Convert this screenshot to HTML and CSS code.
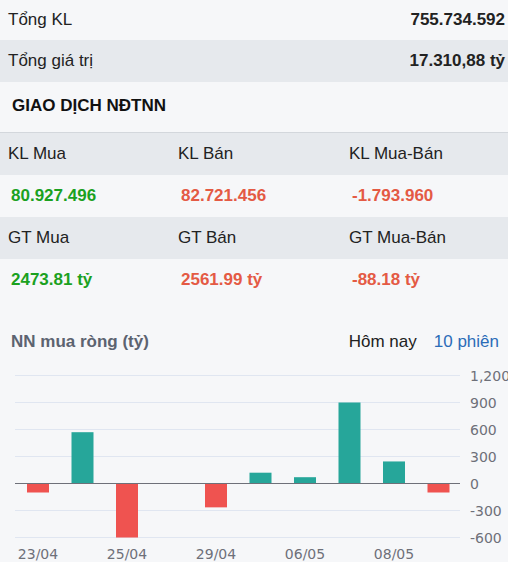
FILE: index.html
```html
<!DOCTYPE html>
<html lang="vi">
<head>
  <meta charset="UTF-8" />
  <meta name="viewport" content="width=device-width, initial-scale=1.0" />
  <title>Giao dịch NĐTNN</title>
  <link rel="stylesheet" href="styles.css">
</head>
<body>
  <div class="summary">
    <div class="sum-row sum-row--first"><span>Tổng KL</span><b>755.734.592</b></div>
    <div class="sum-row sum-row--alt"><span>Tổng giá trị</span><b>17.310,88 tỷ</b></div>
  </div>

  <h3 class="section-title">GIAO DỊCH NĐTNN</h3>

  <div class="foreign">
    <div class="f-row f-row--head">
      <div class="f-cell">KL Mua</div>
      <div class="f-cell">KL Bán</div>
      <div class="f-cell">KL Mua-Bán</div>
    </div>
    <div class="f-row">
      <div class="f-cell f-val up">80.927.496</div>
      <div class="f-cell f-val down">82.721.456</div>
      <div class="f-cell f-val down">-1.793.960</div>
    </div>
    <div class="f-row f-row--head">
      <div class="f-cell">GT Mua</div>
      <div class="f-cell">GT Bán</div>
      <div class="f-cell">GT Mua-Bán</div>
    </div>
    <div class="f-row">
      <div class="f-cell f-val up">2473.81 tỷ</div>
      <div class="f-cell f-val down">2561.99 tỷ</div>
      <div class="f-cell f-val down">-88.18 tỷ</div>
    </div>
  </div>

  <div class="chart-head">
    <span class="chart-title">NN mua ròng (tỷ)</span>
    <div class="tabs">
      <span class="tab">Hôm nay</span>
      <span class="tab tab--active">10 phiên</span>
    </div>
  </div>

  <svg class="chart" width="508" height="199" viewBox="0 0 508 199">
    <g class="grid">
      <line x1="15" x2="460" y1="12.5" y2="12.5" />
      <line x1="15" x2="460" y1="39.5" y2="39.5" />
      <line x1="15" x2="460" y1="66.5" y2="66.5" />
      <line x1="15" x2="460" y1="93.5" y2="93.5" />
      <line x1="15" x2="460" y1="147.5" y2="147.5" />
      <line x1="15" x2="460" y1="174.5" y2="174.5" />
    </g>
    <g id="bars"></g>
    <line class="zero" x1="15" x2="460" y1="120.5" y2="120.5" />
    <g class="ylabels">
      <text x="470" y="18">1,200</text>
      <text x="470" y="45">900</text>
      <text x="470" y="72">600</text>
      <text x="470" y="99">300</text>
      <text x="470" y="126">0</text>
      <text x="470" y="153">-300</text>
      <text x="470" y="180">-600</text>
    </g>
    <g class="xlabels">
      <text x="38" y="196">23/04</text>
      <text x="127" y="196">25/04</text>
      <text x="216" y="196">29/04</text>
      <text x="305" y="196">06/05</text>
      <text x="394" y="196">08/05</text>
    </g>
  </svg>

  <script>
    // net foreign buy, 10 sessions (ty)
    const net = [-100, 570, -600, 0, -265, 120, 70, 900, 245, -100];
    const zero = 120.5;
    const scale = 27 / 300;
    const bars = document.getElementById('bars');
    net.forEach((v, i) => {
      if (v === 0) return;
      const h = Math.abs(v) * scale;
      const r = document.createElementNS('http://www.w3.org/2000/svg', 'rect');
      r.setAttribute('x', 27 + i * 44.5);
      r.setAttribute('width', 22);
      r.setAttribute('y', v > 0 ? zero - h : zero);
      r.setAttribute('height', h);
      r.setAttribute('class', v > 0 ? 'bar-up' : 'bar-down');
      bars.appendChild(r);
    });
  </script>
</body>
</html>
```

FILE: styles.css
```css
body {
  margin: 0;
  background: #f6f7f9;
  font-family: "Liberation Sans", Arial, sans-serif;
  font-size: 17px;
  color: #222;
}
.sum-row {
  display: flex;
  justify-content: space-between;
  align-items: center;
  height: 42px;
  padding: 0 3px 0 8px;
}
.sum-row--first {
  height: 40px;
  box-sizing: border-box;
  align-items: flex-end;
  padding-bottom: 10px;
}
.sum-row--alt {
  background: #e6e9ed;
}
.section-title {
  margin: 0;
  height: 50px;
  line-height: 48px;
  padding-left: 12px;
  font-size: 17px;
  font-weight: bold;
  color: #111;
  border-bottom: 1px solid #d3d7dc;
}
.f-row {
  display: grid;
  grid-template-columns: 170px 171px 167px;
  height: 42px;
  align-items: center;
}
.f-row--head {
  background: #e6e9ed;
}
.f-cell {
  padding-left: 8px;
}
.f-val {
  padding-left: 11px;
  font-weight: bold;
}
.up {
  color: #1ba11f;
}
.down {
  color: #e45a44;
}
.chart-head {
  display: flex;
  justify-content: space-between;
  align-items: center;
  height: 42px;
  margin-top: 20px;
  padding: 0 9px 0 11px;
}
.chart-title {
  font-weight: bold;
  color: #5c6370;
}
.tabs {
  display: flex;
  gap: 17px;
}
.tab--active {
  color: #2b6cb8;
}
.chart {
  display: block;
}
.grid line {
  stroke: #e0e6f1;
  stroke-width: 1;
}
.zero {
  stroke: #6e7079;
  stroke-width: 1;
}
.bar-up {
  fill: #26a69a;
}
.bar-down {
  fill: #ef5350;
}
.ylabels text,
.xlabels text {
  font-family: "DejaVu Sans", sans-serif;
  font-size: 14px;
  fill: #6e7079;
}
.xlabels text {
  text-anchor: middle;
}
```
